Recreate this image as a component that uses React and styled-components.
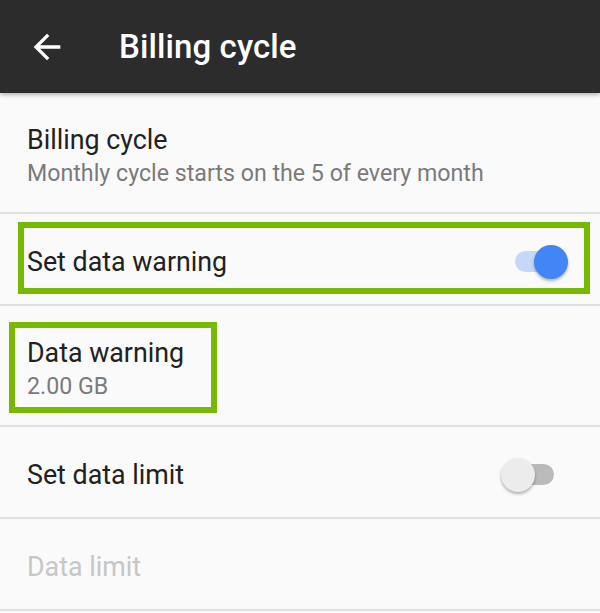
import React from "react";
import styled, { createGlobalStyle } from "styled-components";

const Global = createGlobalStyle`
  html, body { margin: 0; padding: 0; background: #fafafa; }
  body { font-family: Roboto, "Noto Sans", Arial, sans-serif; }
  * { box-sizing: border-box; }
`;

const Screen = styled.div`
  width: 600px;
  height: 613px;
  background: #fafafa;
  overflow: hidden;
  display: flex;
  flex-direction: column;
`;

const Toolbar = styled.header`
  height: 93px;
  flex: 0 0 93px;
  background: #2c2c2c;
  display: flex;
  align-items: center;
  padding-left: 27px;
  box-shadow: 0 2px 4px rgba(0, 0, 0, 0.28);
  position: relative;
  z-index: 1;
`;

const BackIcon = styled.svg`
  width: 40px;
  height: 40px;
  flex: 0 0 40px;
`;

const Title = styled.h1`
  margin: 0 0 0 52px;
  font-family: Roboto, sans-serif;
  font-weight: 500;
  font-size: 33px;
  color: #ffffff;
  letter-spacing: 0.1px;
`;

const List = styled.div`
  display: flex;
  flex-direction: column;
`;

const Row = styled.div`
  position: relative;
  height: ${(p) => (p.$tall ? 121 : 92)}px;
  flex: 0 0 auto;
  border-bottom: 2px solid #e0e0e0;
  display: flex;
  align-items: center;
  justify-content: space-between;
  padding: ${(p) => (p.$tall ? 8 : 5)}px ${(p) => p.$pr || 26}px 0 27px;
`;

const Texts = styled.div`
  display: flex;
  flex-direction: column;
`;

const Primary = styled.div`
  font-size: 26.8px;
  line-height: 34px;
  color: ${(p) => (p.$disabled ? "#c6c6c6" : "#212121")};
`;

const Secondary = styled.div`
  font-size: 23.2px;
  line-height: 33px;
  color: #7a7a7a;
`;

const Track = styled.div`
  position: relative;
  width: 46px;
  height: 21px;
  border-radius: 11px;
  background: ${(p) => (p.$on ? "#c5d8f7" : "#bababa")};
`;

const Thumb = styled.div`
  position: absolute;
  top: 50%;
  ${(p) => (p.$on ? "right: -7px;" : "left: -7px;")}
  width: 34px;
  height: 34px;
  margin-top: -17px;
  border-radius: 50%;
  background: ${(p) => (p.$on ? "#4285f4" : "#ececec")};
  box-shadow: 0 2px 3px rgba(0, 0, 0, 0.3);
`;

const Highlight = styled.div`
  position: absolute;
  top: ${(p) => p.$top}px;
  left: ${(p) => p.$left}px;
  width: ${(p) => p.$w}px;
  height: ${(p) => p.$h}px;
  border: 6px solid #76b900;
  pointer-events: none;
`;

const Switch = ({ on }) => (
  <Track $on={on}>
    <Thumb $on={on} />
  </Track>
);

export default function App() {
  return (
    <>
      <Global />
      <Screen>
        <Toolbar>
          <BackIcon viewBox="0 0 24 24">
            <path
              fill="#ffffff"
              d="M20 11H7.83l5.59-5.59L12 4l-8 8 8 8 1.41-1.41L7.83 13H20v-2z"
            />
          </BackIcon>
          <Title>Billing cycle</Title>
        </Toolbar>
        <List>
          <Row $tall>
            <Texts>
              <Primary>Billing cycle</Primary>
              <Secondary>Monthly cycle starts on the 5 of every month</Secondary>
            </Texts>
          </Row>
          <Row $pr={39}>
            <Primary>Set data warning</Primary>
            <Switch on />
            <Highlight $top={8} $left={18} $w={572} $h={72} />
          </Row>
          <Row $tall>
            <Texts>
              <Primary>Data warning</Primary>
              <Secondary>2.00 GB</Secondary>
            </Texts>
            <Highlight $top={16} $left={9} $w={208} $h={91} />
          </Row>
          <Row $pr={46}>
            <Primary>Set data limit</Primary>
            <Switch />
          </Row>
          <Row>
            <Primary $disabled>Data limit</Primary>
          </Row>
        </List>
      </Screen>
    </>
  );
}
